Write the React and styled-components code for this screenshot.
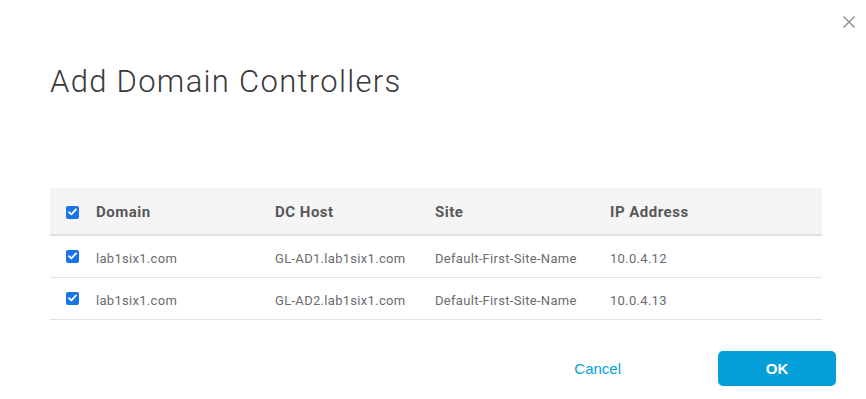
import React, { useState } from "react";
import styled, { createGlobalStyle } from "styled-components";

const GlobalStyle = createGlobalStyle`
  html, body {
    margin: 0;
    background: #fff;
    font-family: Roboto, "Liberation Sans", Arial, sans-serif;
  }
`;

const Dialog = styled.div`
  position: relative;
  width: 866px;
  height: 399px;
  box-sizing: border-box;
  padding: 63px 30px 0 50px;
  display: flex;
  flex-direction: column;
`;

const CloseButton = styled.button`
  position: absolute;
  top: 15px;
  right: 10px;
  width: 14px;
  height: 14px;
  padding: 0;
  border: 0;
  background: none;
  cursor: pointer;
  display: flex;
  align-items: center;
  justify-content: center;
`;

const Title = styled.h1`
  margin: 0;
  font-size: 31px;
  line-height: 37px;
  font-weight: 300;
  letter-spacing: 1.3px;
  color: #39393b;
`;

const Table = styled.div`
  margin: 88px 14px 0 0;
`;

const Row = styled.div`
  display: grid;
  grid-template-columns: 46px 179px 160px 175px 1fr;
  align-items: center;
  height: ${(p) => (p.$header ? "46px" : "41px")};
  background: ${(p) => (p.$header ? "#f5f5f5" : "#fff")};
  border-bottom: ${(p) => (p.$header ? "2px solid #e2e2e2" : "1px solid #e3e3e3")};
`;

const Cell = styled.div`
  font-size: 13px;
  color: #6b6b6e;
  white-space: nowrap;
  letter-spacing: 0.3px;
  margin-top: 3px;
`;

const HeadCell = styled.div`
  font-size: 15px;
  font-weight: 700;
  color: #58585b;
  white-space: nowrap;
  letter-spacing: 0.5px;
  margin-top: 2px;
`;

const CheckCell = styled.div`
  padding-left: 16px;
  display: flex;
  align-items: center;
  margin-top: ${(p) => (p.$header ? "2px" : "-1px")};
`;

const Box = styled.span`
  width: 13px;
  height: 13px;
  border-radius: 2px;
  background: ${(p) => (p.$on ? "#1a73e8" : "#fff")};
  border: ${(p) => (p.$on ? "none" : "1px solid #8a8a8a")};
  box-sizing: border-box;
  display: flex;
  align-items: center;
  justify-content: center;
  cursor: pointer;
`;

const Footer = styled.div`
  margin-top: 31px;
  display: flex;
  justify-content: flex-end;
  align-items: center;
  gap: 97px;
`;

const LinkButton = styled.button`
  border: 0;
  background: none;
  padding: 0;
  font-family: "Liberation Sans", Arial, sans-serif;
  font-size: 15px;
  color: #049fd9;
  cursor: pointer;
`;

const PrimaryButton = styled.button`
  width: 118px;
  height: 35px;
  border: 0;
  border-radius: 5px;
  background: #049fd9;
  color: #fff;
  font-family: "Liberation Sans", Arial, sans-serif;
  font-size: 15px;
  font-weight: 700;
  cursor: pointer;
`;

const Check = ({ on, onClick }) => (
  <Box $on={on} onClick={onClick}>
    {on && (
      <svg width="9" height="8" viewBox="0 0 9 8">
        <path d="M1 4.2 L3.4 6.4 L8 1.4" fill="none" stroke="#fff" strokeWidth="1.8" strokeLinecap="round" strokeLinejoin="round" />
      </svg>
    )}
  </Box>
);

const rows = [
  { domain: "lab1six1.com", host: "GL-AD1.lab1six1.com", site: "Default-First-Site-Name", ip: "10.0.4.12" },
  { domain: "lab1six1.com", host: "GL-AD2.lab1six1.com", site: "Default-First-Site-Name", ip: "10.0.4.13" },
];

export default function App() {
  const [checked, setChecked] = useState(rows.map(() => true));
  const all = checked.every(Boolean);

  return (
    <>
      <GlobalStyle />
      <Dialog>
        <CloseButton aria-label="Close">
          <svg width="14" height="14" viewBox="0 0 14 14">
            <path d="M1.5 1.5 L12.5 12.5 M12.5 1.5 L1.5 12.5" stroke="#8c8c8c" strokeWidth="1.4" />
          </svg>
        </CloseButton>
        <Title>Add Domain Controllers</Title>
        <Table>
          <Row $header>
            <CheckCell $header>
              <Check on={all} onClick={() => setChecked(rows.map(() => !all))} />
            </CheckCell>
            <HeadCell>Domain</HeadCell>
            <HeadCell>DC Host</HeadCell>
            <HeadCell>Site</HeadCell>
            <HeadCell>IP Address</HeadCell>
          </Row>
          {rows.map((r, i) => (
            <Row key={r.host}>
              <CheckCell>
                <Check
                  on={checked[i]}
                  onClick={() => setChecked(checked.map((c, j) => (j === i ? !c : c)))}
                />
              </CheckCell>
              <Cell>{r.domain}</Cell>
              <Cell>{r.host}</Cell>
              <Cell>{r.site}</Cell>
              <Cell>{r.ip}</Cell>
            </Row>
          ))}
        </Table>
        <Footer>
          <LinkButton>Cancel</LinkButton>
          <PrimaryButton>OK</PrimaryButton>
        </Footer>
      </Dialog>
    </>
  );
}
